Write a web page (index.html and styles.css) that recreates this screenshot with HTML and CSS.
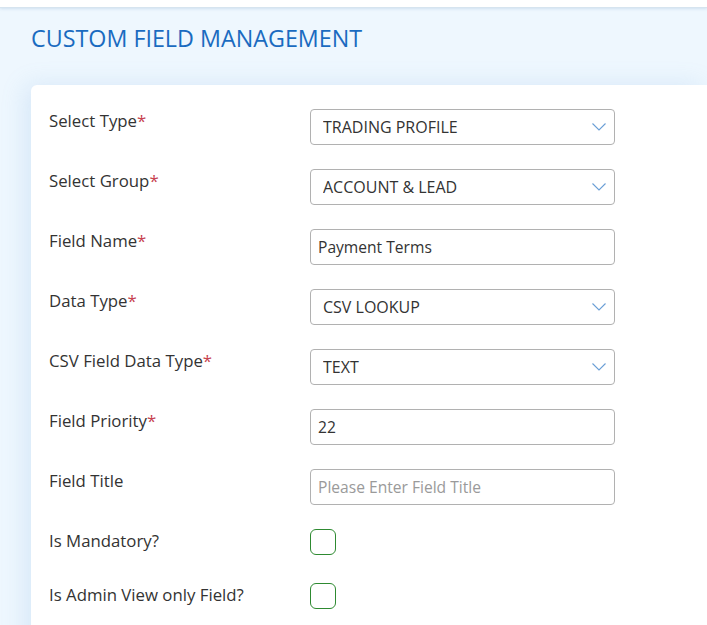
FILE: index.html
```html
<!DOCTYPE html>
<html lang="en">
<head>
    <meta charset="UTF-8">
    <meta name="viewport" content="width=device-width, initial-scale=1.0">
    <title>Custom Field Management</title>
    <link rel="stylesheet" href="styles.css">
</head>
<body>
    <div class="topbar"></div>
    <div class="page">
        <h1 class="page-title">CUSTOM FIELD MANAGEMENT</h1>
        <div class="card">
            <form class="field-form">
                <label class="field-label" for="select-type">Select Type<span class="req">*</span></label>
                <div class="select-wrap">
                    <select id="select-type" class="control">
                        <option>TRADING PROFILE</option>
                    </select>
                    <svg class="chevron" viewBox="0 0 14 8"><path d="M0.5 0.5 L7 7 L13.5 0.5"/></svg>
                </div>

                <label class="field-label" for="select-group">Select Group<span class="req">*</span></label>
                <div class="select-wrap">
                    <select id="select-group" class="control">
                        <option>ACCOUNT &amp; LEAD</option>
                    </select>
                    <svg class="chevron" viewBox="0 0 14 8"><path d="M0.5 0.5 L7 7 L13.5 0.5"/></svg>
                </div>

                <label class="field-label" for="field-name">Field Name<span class="req">*</span></label>
                <input id="field-name" class="control text-input" type="text" value="Payment Terms">

                <label class="field-label" for="data-type">Data Type<span class="req">*</span></label>
                <div class="select-wrap">
                    <select id="data-type" class="control">
                        <option>CSV LOOKUP</option>
                    </select>
                    <svg class="chevron" viewBox="0 0 14 8"><path d="M0.5 0.5 L7 7 L13.5 0.5"/></svg>
                </div>

                <label class="field-label" for="csv-type">CSV Field Data Type<span class="req">*</span></label>
                <div class="select-wrap">
                    <select id="csv-type" class="control">
                        <option>TEXT</option>
                    </select>
                    <svg class="chevron" viewBox="0 0 14 8"><path d="M0.5 0.5 L7 7 L13.5 0.5"/></svg>
                </div>

                <label class="field-label" for="priority">Field Priority<span class="req">*</span></label>
                <input id="priority" class="control text-input" type="text" value="22">

                <label class="field-label" for="field-title">Field Title</label>
                <input id="field-title" class="control text-input" type="text" placeholder="Please Enter Field Title">

                <label class="field-label" for="mandatory">Is Mandatory?</label>
                <div class="check-wrap"><input id="mandatory" class="check" type="checkbox"></div>

                <label class="field-label" for="admin-only">Is Admin View only Field?</label>
                <div class="check-wrap"><input id="admin-only" class="check" type="checkbox"></div>
            </form>
        </div>
    </div>
</body>
</html>
```

FILE: styles.css
```css
html, body {
    margin: 0;
    padding: 0;
}
body {
    font-family: "Open Sans", "Liberation Sans", sans-serif;
    background-color: #eef7fe;
    color: #333;
    overflow: hidden;
}
.topbar {
    height: 7px;
    background: #ffffff;
    border-bottom: 1px solid #d6e4ef;
    box-shadow: 0 1px 3px rgba(120, 160, 200, 0.25);
}
.page {
    padding: 0 0 0 31px;
}
.page-title {
    margin: 0;
    padding: 15px 0 0 0;
    height: 77px;
    box-sizing: border-box;
    font-size: 23.3px;
    font-weight: 400;
    color: #1a6bc0;
    line-height: 30px;
}
.card {
    background: #ffffff;
    border-radius: 6px 0 0 0;
    box-shadow: -6px 0 24px rgba(110, 165, 220, 0.18);
    padding: 24px 0 40px 18px;
    height: 600px;
}
.field-form {
    display: grid;
    grid-template-columns: 261px 305px;
    row-gap: 24px;
    align-items: start;
}
.field-label {
    font-size: 16.8px;
    line-height: 24px;
}
.req {
    color: #c7424f;
}
.control {
    box-sizing: border-box;
    width: 305px;
    height: 36px;
    margin: 0;
    border: 1px solid #b1b1b1;
    border-radius: 4px;
    background: #ffffff;
    font-family: inherit;
    font-size: 16px;
    color: #333;
    outline: none;
}
.select-wrap {
    position: relative;
    height: 36px;
}
.select-wrap select {
    appearance: none;
    -webkit-appearance: none;
    padding: 0 30px 0 12px;
}
.chevron {
    position: absolute;
    right: 9px;
    top: 14px;
    width: 14px;
    height: 8px;
    fill: none;
    stroke: #6b9fd6;
    stroke-width: 1.1;
    pointer-events: none;
}
.text-input {
    padding: 0 7px;
    font-size: 15.6px;
}
.text-input::placeholder {
    color: #9a9a9a;
}
.check-wrap {
    height: 30px;
}
.check {
    appearance: none;
    -webkit-appearance: none;
    margin: 0;
    width: 26px;
    height: 26px;
    border: 1.5px solid #2e8a31;
    border-radius: 6px;
    background: #ffffff;
    display: block;
}
```
